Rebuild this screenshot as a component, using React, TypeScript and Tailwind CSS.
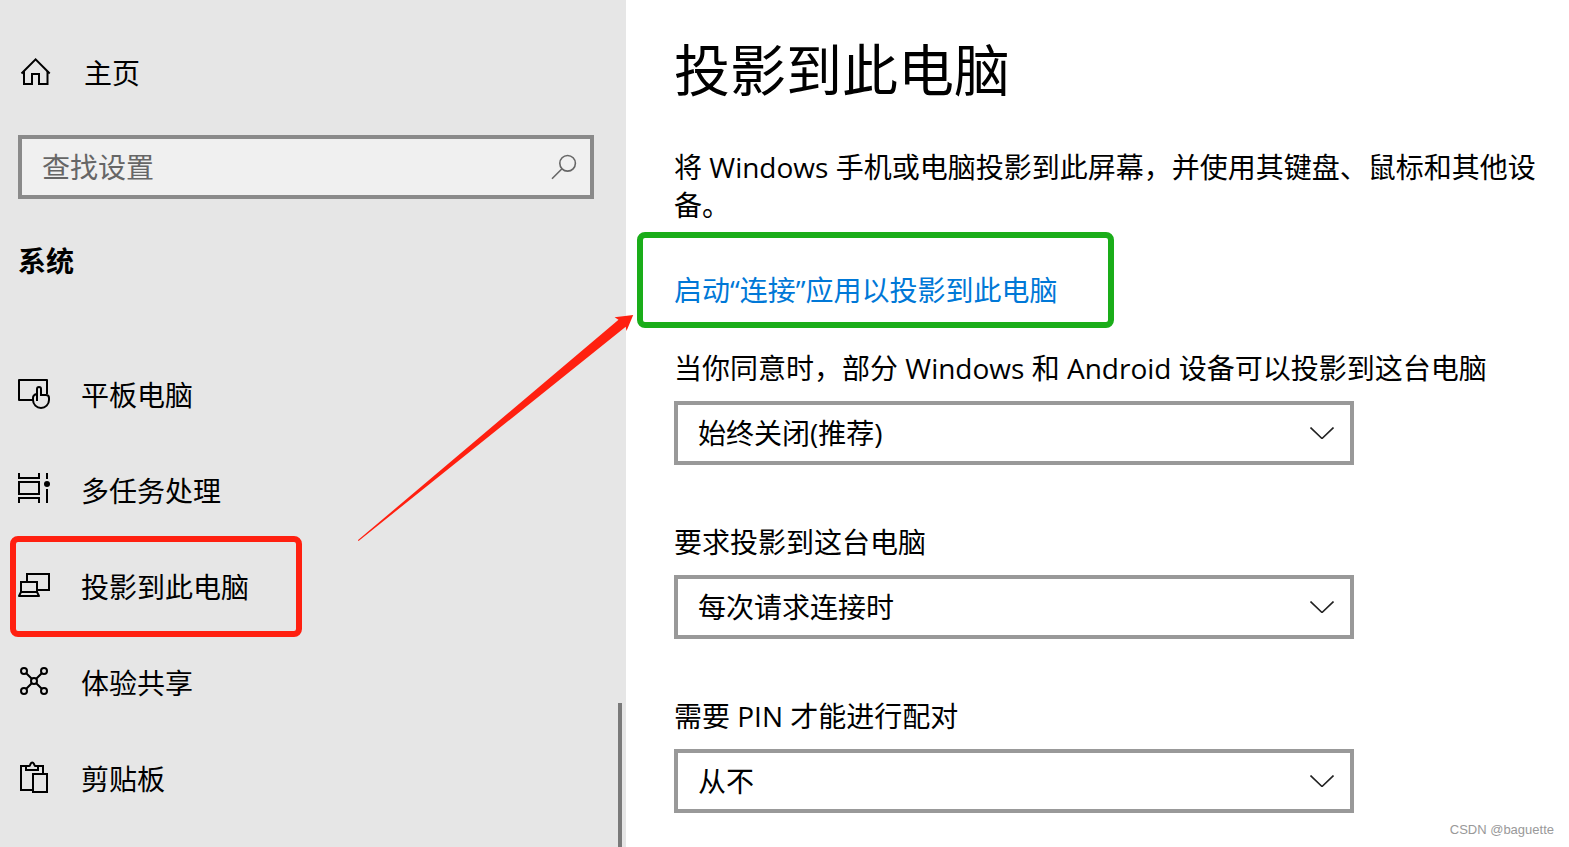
/**
 * App.tsx
 * System settings: projecting to this PC
 */
import React from "react";

interface NavItem {
  label: string;
  icon: React.ReactNode;
  marked?: boolean;
}

interface SelectFieldProps {
  id: string;
  label: string;
  options: string[];
}

const Icon: React.FC<{ children: React.ReactNode }> = ({ children }) => (
  <svg
    viewBox="0 0 36 36"
    className="w-9 h-9 shrink-0"
    fill="none"
    stroke="currentColor"
    strokeWidth="2"
    aria-hidden="true"
  >
    {children}
  </svg>
);

const navItems: NavItem[] = [
  {
    label: "平板电脑",
    icon: (
      <Icon>
        <path d="M17 23H3V3h28v14" strokeLinejoin="round" />
        <path d="M21 24V12a2 2 0 0 1 4 0v6h5a3 3 0 0 1 3 3v2a8 8 0 0 1-16 0v-2c0-2 1-3.500 4-4" />
      </Icon>
    ),
  },
  {
    label: "多任务处理",
    icon: (
      <Icon>
        <path d="M3 0v5h20V0M3 9h20v12H3zM3 30v-5h20v5M31 0v6M31 16v14" />
        <circle cx="31" cy="11" r="3" fill="currentColor" stroke="none" />
      </Icon>
    ),
  },
  {
    label: "投影到此电脑",
    marked: true,
    icon: (
      <Icon>
        <path d="M11 12V5h22v16H22" />
        <path d="M5 23V13h16v10" />
        <path d="M5 23h16l2 4H3z" strokeLinejoin="round" />
      </Icon>
    ),
  },
  {
    label: "体验共享",
    icon: (
      <Icon>
        <circle cx="8" cy="6" r="3" />
        <circle cx="28" cy="6" r="3" />
        <circle cx="18" cy="16" r="3" />
        <circle cx="8" cy="26" r="3" />
        <circle cx="28" cy="26" r="3" />
        <path d="M10 8l6 6M26 8l-6 6M10 24l6-6M26 24l-6-6" />
      </Icon>
    ),
  },
  {
    label: "剪贴板",
    icon: (
      <Icon>
        <path d="M17 29H5V5h4M23 5h4v8" />
        <path d="M10 5h3c1 0 1-1 1.500-2 1-2 2.500-2 3.500 0 .5 1 .5 2 1.500 2H22v4H10z" />
        <path d="M17 13h14v18H17z" />
      </Icon>
    ),
  },
];

const SelectField: React.FC<SelectFieldProps> = ({ id, label, options }) => (
  <div>
    <label htmlFor={id} className="block">
      {label}
    </label>
    <div className="relative mt-3.5 w-full max-w-[680px]">
      <select
        id={id}
        className="block w-full h-16 appearance-none rounded-none border-4 border-[#999999] bg-white pl-5 pr-14 text-[28px] outline-none"
      >
        {options.map((option) => (
          <option key={option}>{option}</option>
        ))}
      </select>
      <svg
        viewBox="0 0 24 12"
        className="pointer-events-none absolute right-5 top-[26px] w-6 h-3"
        fill="none"
        stroke="#222222"
        strokeWidth="1.6"
        aria-hidden="true"
      >
        <path d="M.5.5 12 11.5 23.5.5" />
      </svg>
    </div>
  </div>
);

const Sidebar: React.FC = () => (
  <aside className="relative w-2/5 max-w-[626px] shrink-0 bg-[#e6e6e6] pt-[41px]">
    <a href="#home" className="flex h-16 items-center gap-8 pl-4">
      <Icon>
        <path d="M5.5 18.5 19.6 4.4 33.7 18.5" />
        <path d="M8 16v13h8V19h7v10h8.5V16" />
      </Icon>
      主页
    </a>

    <div className="relative mt-[30px] ml-[18px] mr-8">
      <input
        type="text"
        aria-label="查找设置"
        placeholder="查找设置"
        className="block w-full h-16 border-4 border-[#8a8a8a] bg-[#f0f0f0] pl-5 pr-14 text-[28px] placeholder:text-[#666666] outline-none"
      />
      <svg
        viewBox="0 0 28 28"
        className="pointer-events-none absolute right-4 top-[18px] w-7 h-7"
        fill="none"
        stroke="#666666"
        strokeWidth="1.6"
        aria-hidden="true"
      >
        <circle cx="17.6" cy="10.3" r="7.8" />
        <path d="M12 15.8 2 25.8" />
      </svg>
    </div>

    <h2 className="mt-[42px] pl-[18px] font-bold leading-10">系统</h2>

    <nav className="mt-[66px]">
      <ul>
        {navItems.map((item) => (
          <li key={item.label} className="relative">
            <button
              type="button"
              className="flex h-24 w-full items-center gap-[29px] pl-4 text-left"
            >
              {item.icon}
              {item.label}
            </button>
            {item.marked && (
              <div className="pointer-events-none absolute -top-[3px] left-[10px] h-[101px] w-[292px] rounded-lg border-6 border-[#ff2010]" />
            )}
          </li>
        ))}
      </ul>
    </nav>

    <div className="absolute bottom-0 right-1 h-36 w-1 bg-[#7a7a7a]" />
  </aside>
);

const App: React.FC = () => (
  <div
    lang="zh-CN"
    className="relative flex min-h-screen bg-white font-['Open_Sans','Noto_Sans_CJK_SC',sans-serif] text-[28px] leading-[38px] text-black"
  >
    <Sidebar />

    <main className="min-w-0 flex-1 pl-12 pr-6 pt-[33px]">
      <h1 className="text-[56px] leading-[72px]">投影到此电脑</h1>

      <p className="mt-[43px]">
        将 Windows 手机或电脑投影到此屏幕，并使用其键盘、鼠标和其他设备。
      </p>

      <div className="relative mt-[47px]">
        <a href="#connect" className="block text-[#0078d7]">
          启动“连接”应用以投影到此电脑
        </a>
        <div className="pointer-events-none absolute -left-[37px] -top-[39px] h-24 w-[477px] rounded-lg border-6 border-[#1aad19]" />
      </div>

      <div className="mt-10 flex flex-col gap-[58px]">
        <SelectField
          id="availability"
          label="当你同意时，部分 Windows 和 Android 设备可以投影到这台电脑"
          options={["始终关闭(推荐)"]}
        />
        <SelectField
          id="request"
          label="要求投影到这台电脑"
          options={["每次请求连接时"]}
        />
        <SelectField
          id="pin"
          label="需要 PIN 才能进行配对"
          options={["从不"]}
        />
      </div>
    </main>

    {/* Arrow from the sidebar entry to the link */}
    <svg
      viewBox="0 0 280 230"
      className="pointer-events-none absolute left-[356px] top-[312px] h-[230px] w-[280px]"
      aria-hidden="true"
    >
      <path
        d="M1.8 228.3 262.5 7.8 258.6 5.3 277.2 3 270.5 19 269.7 14.7 2.6 229z"
        fill="#ff2010"
      />
    </svg>

    <span className="absolute bottom-[7px] right-[15px] font-['Liberation_Sans',sans-serif] text-[13px] leading-5 text-[#999999]">
      CSDN @baguette
    </span>
  </div>
);

export default App;
